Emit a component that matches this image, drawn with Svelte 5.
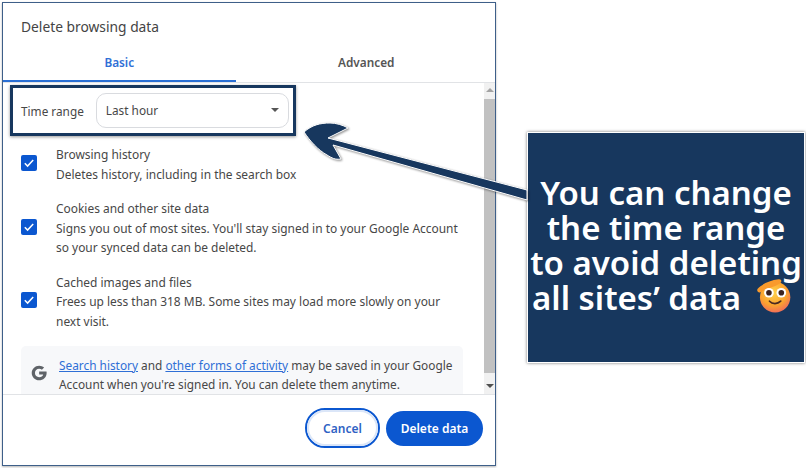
<script>
  const options = [
    {
      title: 'Browsing history',
      lines: ['Deletes history, including in the search box']
    },
    {
      title: 'Cookies and other site data',
      lines: ["Signs you out of most sites. You'll stay signed in to your Google Account", 'so your synced data can be deleted.']
    },
    {
      title: 'Cached images and files',
      lines: ['Frees up less than 318 MB. Some sites may load more slowly on your', 'next visit.']
    }
  ]
</script>

<div class="page">
  <section class="dialog">
    <h1>Delete browsing data</h1>

    <div class="tabs">
      <div class="tab active">Basic</div>
      <div class="tab">Advanced</div>
    </div>

    <div class="body">
      <div class="content">
        <div class="range">
          <span>Time range</span>
          <div class="select">
            Last hour
            <i class="caret"></i>
          </div>
        </div>

        {#each options as option}
          <div class="option">
            <div class="check">
              <svg viewBox="0 0 16 16" width="16" height="16">
                <path d="M3.8 8.3l2.8 2.8 5.6-6" fill="none" stroke="#fff" stroke-width="1.5" />
              </svg>
            </div>
            <div class="label">
              <div>{option.title}</div>
              {#each option.lines as line}
                <div>{line}</div>
              {/each}
            </div>
          </div>
        {/each}

        <div class="notice">
          <svg class="g" viewBox="0 0 24 24" width="18" height="18">
            <path
              d="M22 10H12.200v3.900h5.400c-.6 2.400-2.600 3.700-5.400 3.700-3.200 0-5.600-2.500-5.600-5.600s2.400-5.600 5.600-5.600c1.400 0 2.700.5 3.700 1.300l2.900-2.900C17 3.100 14.800 2.200 12.200 2.200 6.700 2.200 2.300 6.600 2.300 12s4.400 9.800 9.900 9.800c5.300 0 10-3.800 10-9.800 0-.7-.1-1.400-.2-2z"
              fill="#5f6368"
            />
          </svg>
          <p>
            <a href="#history">Search history</a> and <a href="#activity">other forms of activity</a> may be saved in your Google
            Account when you're signed in. You can delete them anytime.
          </p>
        </div>
      </div>

      <div class="scrollbar">
        <i class="up"></i>
        <div class="thumb"></div>
        <i class="down"></i>
      </div>
    </div>

    <footer>
      <button class="cancel">Cancel</button>
      <button class="delete">Delete data</button>
    </footer>
  </section>

  <aside class="callout">
    <div class="message">
      <span>You can change</span>
      <span>the time range</span>
      <span>to avoid deleting</span>
      <span class="last">all sites’ data
        <svg viewBox="0 0 32 32" width="36" height="36">
          <defs>
            <radialGradient id="face" cx="45%" cy="35%" r="70%">
              <stop offset="0" stop-color="#ffd24d" />
              <stop offset="0.6" stop-color="#fba32f" />
              <stop offset="1" stop-color="#f0655f" />
            </radialGradient>
          </defs>
          <circle cx="17" cy="18" r="13.500" fill="url(#face)" />
          <path d="M1.500 10.500C5 6.500 12 3 20 2c2.500-.5 3.500 2 1.500 3.500C16 9 9 10.500 4 13.500c-2 .8-3.800-1.300-2.500-3z" fill="#f99a2c" />
          <circle cx="11.500" cy="14" r="4.300" fill="#fff" />
          <circle cx="22.500" cy="14" r="4.300" fill="#fff" />
          <circle cx="11.500" cy="14" r="2.500" fill="#3c2320" />
          <circle cx="22.500" cy="14" r="2.500" fill="#3c2320" />
          <path d="M12 21.500c2.500 2.800 7 2.800 10 0" fill="none" stroke="#4a2a22" stroke-width="1.500" stroke-linecap="round" />
        </svg>
      </span>
    </div>
  </aside>

  <svg class="arrow" viewBox="0 0 240 90" width="240" height="90">
    <path
      d="M4 42C12 35 20 33 30 33C36 33 43 35 48 38L28 48L227 100L227 110L33 55L41 69C35 70 32 68 27 65C18 60 10 51 4 42Z"
      fill="#17375e"
      stroke="#fff"
      stroke-width="1"
    />
  </svg>
</div>

<style>
  :global(body) {
    background: #fff;
  }

  .page {
    position: relative;
    display: flex;
    align-items: flex-start;
    gap: 31px;
    box-sizing: border-box;
    width: 806px;
    height: 468px;
    padding: 2px 2px 0 2px;
    font-family: 'Noto Sans', 'Open Sans', sans-serif;
    overflow: hidden;
  }

  .dialog {
    display: flex;
    flex-direction: column;
    box-sizing: border-box;
    flex: none;
    width: 494px;
    height: 464px;
    border: 1.5px solid #3e5f89;
    box-shadow: 0 1px 2px rgba(0, 0, 0, 0.3);
    background: #fff;
    color: #474747;
  }

  h1 {
    margin: 0;
    padding: 13px 18px 0;
    height: 31px;
    font-size: 13.800px;
    font-weight: 400;
    line-height: 22px;
    color: #444;
  }

  .tabs {
    display: flex;
    height: 35px;
    border-bottom: 1px solid #e1e3e6;
  }

  .tab {
    flex: 258;
    padding-left: 2px;
    text-align: center;
    font-size: 11.800px;
    font-weight: 600;
    line-height: 31px;
    color: #555;
  }

  .tab.active {
    flex: 233;
    padding-left: 0;
    color: #2f6fd6;
    border-bottom: 2px solid #2a6fd4;
    height: 33px;
  }

  .body {
    display: flex;
    flex: none;
    height: 311px;
    overflow: hidden;
  }

  .content {
    flex: 1;
    padding: 2px 0 0 18px;
    min-width: 0;
  }

  .range {
    display: flex;
    align-items: center;
    gap: 12px;
    box-sizing: border-box;
    margin-left: -11px;
    width: 286px;
    height: 51px;
    padding: 0 4px 0 8px;
    border: 3px solid #17375e;
    box-shadow: 0 1px 3px rgba(0, 0, 0, 0.4);
    font-size: 11.800px;
    white-space: nowrap;
  }

  .select {
    position: relative;
    flex: 1;
    box-sizing: border-box;
    height: 35px;
    padding-left: 9px;
    border: 1px solid #d9dbdf;
    border-radius: 10px;
    line-height: 33px;
  }

  .caret {
    position: absolute;
    top: 14px;
    right: 9px;
    border: 4px solid transparent;
    border-top: 4px solid #555;
    border-bottom: 0;
  }

  .option {
    display: flex;
    align-items: center;
    gap: 19px;
    font-size: 11.950px;
    line-height: 19.500px;
  }

  .range + .option {
    margin-top: 9px;
  }

  .option + .option {
    margin-top: 15px;
  }

  .check {
    flex: none;
    width: 16px;
    height: 16px;
    margin-bottom: 3px;
    border-radius: 2px;
    background: #0b57d0;
  }

  .check svg {
    display: block;
  }

  .label {
    white-space: nowrap;
  }

  .notice {
    display: flex;
    align-items: center;
    gap: 11px;
    box-sizing: border-box;
    width: 442px;
    height: 62px;
    margin-top: 15px;
    padding: 0 0 4px 9px;
    border-radius: 5px;
    background: #f7f8fa;
    font-size: 11.850px;
    line-height: 19.500px;
  }

  .notice p {
    margin: 0;
  }

  .notice a {
    color: #2f6fd6;
  }

  .g {
    flex: none;
    margin-top: -5px;
  }

  .scrollbar {
    display: flex;
    flex-direction: column;
    align-items: center;
    flex: none;
    width: 11px;
    background: #f1f1f1;
  }

  .up,
  .down {
    flex: none;
    border: 4px solid transparent;
  }

  .up {
    margin: 5px 0 7px;
    border-top: 0;
    border-bottom: 4px solid #a3a3a3;
  }

  .down {
    margin: 11px 0 6px;
    border-bottom: 0;
    border-top: 4px solid #505050;
  }

  .thumb {
    flex: 1;
    width: 100%;
    background: #c1c1c1;
  }

  footer {
    display: flex;
    justify-content: flex-end;
    align-items: center;
    gap: 6px;
    flex: 1;
    padding: 0 12px 4px 0;
    border-top: 1px solid #e1e3e6;
  }

  button {
    font-family: inherit;
    font-size: 12px;
    font-weight: 600;
    border-radius: 20px;
  }

  .cancel {
    width: 75px;
    height: 40px;
    border: 2px solid #0b57d0;
    outline: 2px solid #dbe6f8;
    outline-offset: -4px;
    background: #fff;
    color: #2f62c4;
  }

  .delete {
    width: 97px;
    height: 35px;
    border: 0;
    background: #0b57d0;
    color: #fff;
  }

  .callout {
    flex: none;
    display: flex;
    align-items: center;
    box-sizing: border-box;
    width: 278px;
    height: 231px;
    margin-top: 130px;
    padding-bottom: 6px;
    border: 1px solid #fff;
    box-shadow: 0 0 3px rgba(0, 0, 0, 0.55);
    background: #17375e;
  }

  .message {
    display: flex;
    flex-direction: column;
    align-items: center;
    width: 100%;
    color: #fff;
    font-family: 'Noto Sans', sans-serif;
    font-size: 33px;
    font-weight: 600;
    line-height: 35px;
    white-space: nowrap;
  }

  .last {
    display: flex;
    align-self: flex-start;
    align-items: center;
    gap: 15px;
    height: 35px;
    margin-left: 4px;
  }

  .last svg {
    margin-top: -4px;
  }

  .arrow {
    position: absolute;
    left: 300px;
    top: 90px;
    overflow: visible;
    filter: drop-shadow(1px 1px 1px rgba(0, 0, 0, 0.45));
  }
</style>
